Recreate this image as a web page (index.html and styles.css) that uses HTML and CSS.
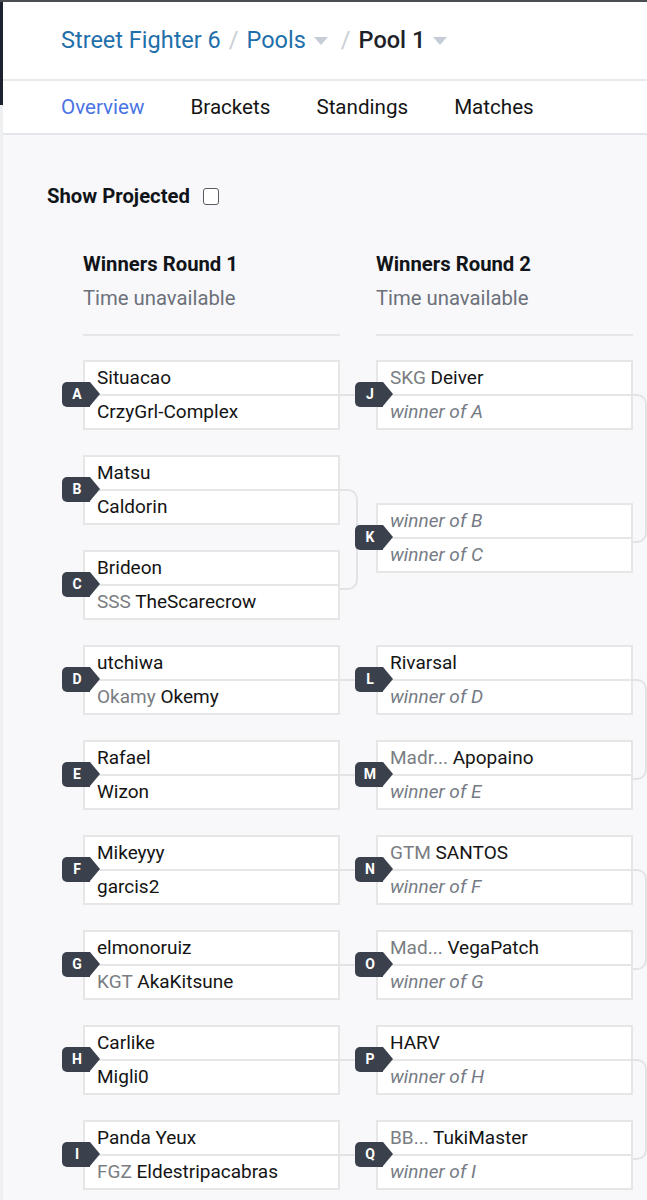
FILE: index.html
```html
<!DOCTYPE html>
<html lang="en">
<head>
  <meta charset="UTF-8" />
  <meta name="viewport" content="width=device-width, initial-scale=1.0" />
  <title>Pool 1 - Street Fighter 6</title>
  <link rel="stylesheet" href="styles.css">
</head>
<body>
  <div class="frame-edge"></div>
  <div class="app">
    <header class="crumbs">
      <a class="crumb" href="#">Street Fighter 6</a>
      <span class="sep">/</span>
      <a class="crumb" href="#">Pools</a>
      <span class="caret"></span>
      <span class="sep">/</span>
      <span class="crumb current">Pool 1</span>
      <span class="caret"></span>
    </header>

    <nav class="tabs">
      <a class="tab active" href="#">Overview</a>
      <a class="tab" href="#">Brackets</a>
      <a class="tab" href="#">Standings</a>
      <a class="tab" href="#">Matches</a>
    </nav>

    <main class="content">
      <label class="projected">
        Show Projected
        <input type="checkbox" class="check" />
      </label>

      <div class="bracket">
        <div class="round-heads">
          <div class="round-head">
            <h4>Winners Round 1</h4>
            <p>Time unavailable</p>
          </div>
          <div class="round-head">
            <h4>Winners Round 2</h4>
            <p>Time unavailable</p>
          </div>
        </div>

        <div class="sets">
          <!-- round 1 -->
          <div class="set c1 r1 feed"><span class="tag">A</span>
            <div class="slot">Situacao</div>
            <div class="slot">CrzyGrl-Complex</div>
          </div>
          <div class="set c1 r2 pair"><span class="tag">B</span>
            <div class="slot">Matsu</div>
            <div class="slot">Caldorin</div>
          </div>
          <div class="set c1 r3"><span class="tag">C</span>
            <div class="slot">Brideon</div>
            <div class="slot"><span class="prefix">SSS</span> TheScarecrow</div>
          </div>
          <div class="set c1 r4 feed"><span class="tag">D</span>
            <div class="slot">utchiwa</div>
            <div class="slot"><span class="prefix">Okamy</span> Okemy</div>
          </div>
          <div class="set c1 r5 feed"><span class="tag">E</span>
            <div class="slot">Rafael</div>
            <div class="slot">Wizon</div>
          </div>
          <div class="set c1 r6 feed"><span class="tag">F</span>
            <div class="slot">Mikeyyy</div>
            <div class="slot">garcis2</div>
          </div>
          <div class="set c1 r7 feed"><span class="tag">G</span>
            <div class="slot">elmonoruiz</div>
            <div class="slot"><span class="prefix">KGT</span> AkaKitsune</div>
          </div>
          <div class="set c1 r8 feed"><span class="tag">H</span>
            <div class="slot">Carlike</div>
            <div class="slot">Migli0</div>
          </div>
          <div class="set c1 r9 feed"><span class="tag">I</span>
            <div class="slot">Panda Yeux</div>
            <div class="slot"><span class="prefix">FGZ</span> Eldestripacabras</div>
          </div>

          <!-- round 2 -->
          <div class="set c2 r1 pair-out tall"><span class="tag">J</span>
            <div class="slot"><span class="prefix">SKG</span> Deiver</div>
            <div class="slot tbd">winner of A</div>
          </div>
          <div class="set c2 r2-3"><span class="tag">K</span>
            <div class="slot tbd">winner of B</div>
            <div class="slot tbd">winner of C</div>
          </div>
          <div class="set c2 r4 pair-out"><span class="tag">L</span>
            <div class="slot">Rivarsal</div>
            <div class="slot tbd">winner of D</div>
          </div>
          <div class="set c2 r5"><span class="tag">M</span>
            <div class="slot"><span class="prefix">Madr...</span> Apopaino</div>
            <div class="slot tbd">winner of E</div>
          </div>
          <div class="set c2 r6 pair-out"><span class="tag">N</span>
            <div class="slot"><span class="prefix">GTM</span> SANTOS</div>
            <div class="slot tbd">winner of F</div>
          </div>
          <div class="set c2 r7"><span class="tag">O</span>
            <div class="slot"><span class="prefix">Mad...</span> VegaPatch</div>
            <div class="slot tbd">winner of G</div>
          </div>
          <div class="set c2 r8 pair-out"><span class="tag">P</span>
            <div class="slot">HARV</div>
            <div class="slot tbd">winner of H</div>
          </div>
          <div class="set c2 r9"><span class="tag">Q</span>
            <div class="slot"><span class="prefix">BB...</span> TukiMaster</div>
            <div class="slot tbd">winner of I</div>
          </div>
        </div>
      </div>
    </main>
  </div>
</body>
</html>
```

FILE: styles.css
```css
* { box-sizing: border-box; }
html, body {
  margin: 0;
  height: 1200px;
  overflow: hidden;
}
body {
  font-family: Roboto, "Liberation Sans", Arial, sans-serif;
  background: #f8f8fa;
  color: #151515;
  border-top: 2px solid #4a4d52;
  position: relative;
}
.frame-edge {
  position: absolute;
  left: 0; top: -2px;
  width: 3px; height: 105px;
  background: #1c2230;
  z-index: 5;
}
.app {
  border-left: 3px solid #eeeff1;
  min-height: 1200px;
  width: 900px;
}
a { text-decoration: none; }

/* breadcrumb */
.crumbs {
  background: #fff;
  height: 79px;
  padding: 0 0 2px 58px;
  display: flex;
  align-items: center;
  gap: 8px;
  font-size: 23.5px;
  border-bottom: 2px solid #e8e9eb;
}
.crumbs .crumb { color: #1f70aa; }
.crumbs .crumb.current { color: #1d2128; font-weight: 500; }
.crumbs .sep { color: #c9ced5; }
.caret {
  width: 0; height: 0;
  border-left: 7px solid transparent;
  border-right: 7px solid transparent;
  border-top: 8px solid #c6cdd7;
  margin: 3px 5px 0 0;
}

/* tabs */
.tabs {
  background: #fff;
  height: 54px;
  padding-left: 58px;
  display: flex;
  align-items: center;
  gap: 46px;
  font-size: 20.6px;
  border-bottom: 2px solid #e4e7ea;
}
.tab { color: #151515; }
.tab.active { color: #4b74e4; }

/* content */
.content { padding: 48px 0 0 44px; }
.projected {
  display: flex;
  align-items: center;
  gap: 13px;
  height: 26px;
  font-size: 20.3px;
  font-weight: 700;
  color: #111418;
}
.check {
  appearance: none;
  width: 16px; height: 17px;
  margin: 0;
  border: 1.5px solid #585c62;
  border-radius: 3px;
  background: #fff;
}

.bracket { margin: 42px 0 0 36px; }
.round-heads,
.sets {
  display: grid;
  grid-template-columns: 257px 257px;
  column-gap: 36px;
}
.round-head {
  padding-bottom: 23px;
  border-bottom: 2px solid #e4e6e9;
}
.round-head h4 {
  margin: 0;
  font-size: 20.3px;
  line-height: 26px;
  font-weight: 700;
  color: #111418;
}
.round-head p {
  margin: 8px 0 0;
  font-size: 20.3px;
  line-height: 26px;
  color: #6c717a;
}

.sets {
  margin-top: 24px;
  grid-template-rows: repeat(9, 70px);
  row-gap: 25px;
}
.c1 { grid-column: 1; }
.c2 { grid-column: 2; }
.r1 { grid-row: 1; }
.r2 { grid-row: 2; }
.r3 { grid-row: 3; }
.r4 { grid-row: 4; }
.r5 { grid-row: 5; }
.r6 { grid-row: 6; }
.r7 { grid-row: 7; }
.r8 { grid-row: 8; }
.r9 { grid-row: 9; }
.r2-3 { grid-row: 2 / span 2; align-self: center; }

.set {
  position: relative;
  height: 70px;
  background: #fff;
  border: 2px solid #e6e6e6;
}
.slot {
  height: 32px;
  line-height: 32px;
  padding-left: 12px;
  font-size: 19px;
  color: #141414;
  white-space: nowrap;
}
.slot:first-of-type { height: 34px; border-bottom: 2px solid #e6e6e6; }
.prefix { color: #7a7d82; }
.slot.tbd { color: #767b85; font-style: italic; }

/* match letter marker */
.tag {
  position: absolute;
  left: -23px; top: 20px;
  width: 28px; height: 25px;
  background: #3b414c;
  border-radius: 5px 0 0 5px;
  color: #fff;
  font-size: 14px;
  font-weight: 700;
  line-height: 25px;
  text-align: center;
  padding-left: 2px;
  z-index: 2;
}
.tag::after {
  content: "";
  position: absolute;
  left: 100%; top: 0;
  border-top: 12.5px solid transparent;
  border-bottom: 12.5px solid transparent;
  border-left: 10px solid #3b414c;
}

/* connector lines between rounds */
.set.feed::after {
  content: "";
  position: absolute;
  left: 100%; top: 32px;
  width: 38px; height: 2px;
  background: #e3e3e3;
}
.set.pair::after,
.set.pair-out::after {
  content: "";
  position: absolute;
  left: 100%; top: 32px;
  width: 18px; height: 97px;
  border: 2px solid #e3e3e3;
  border-left: none;
  border-radius: 0 10px 10px 0;
}
.set.pair-out::after { width: 14px; }
.set.pair-out.tall::after { height: 145px; }
```
